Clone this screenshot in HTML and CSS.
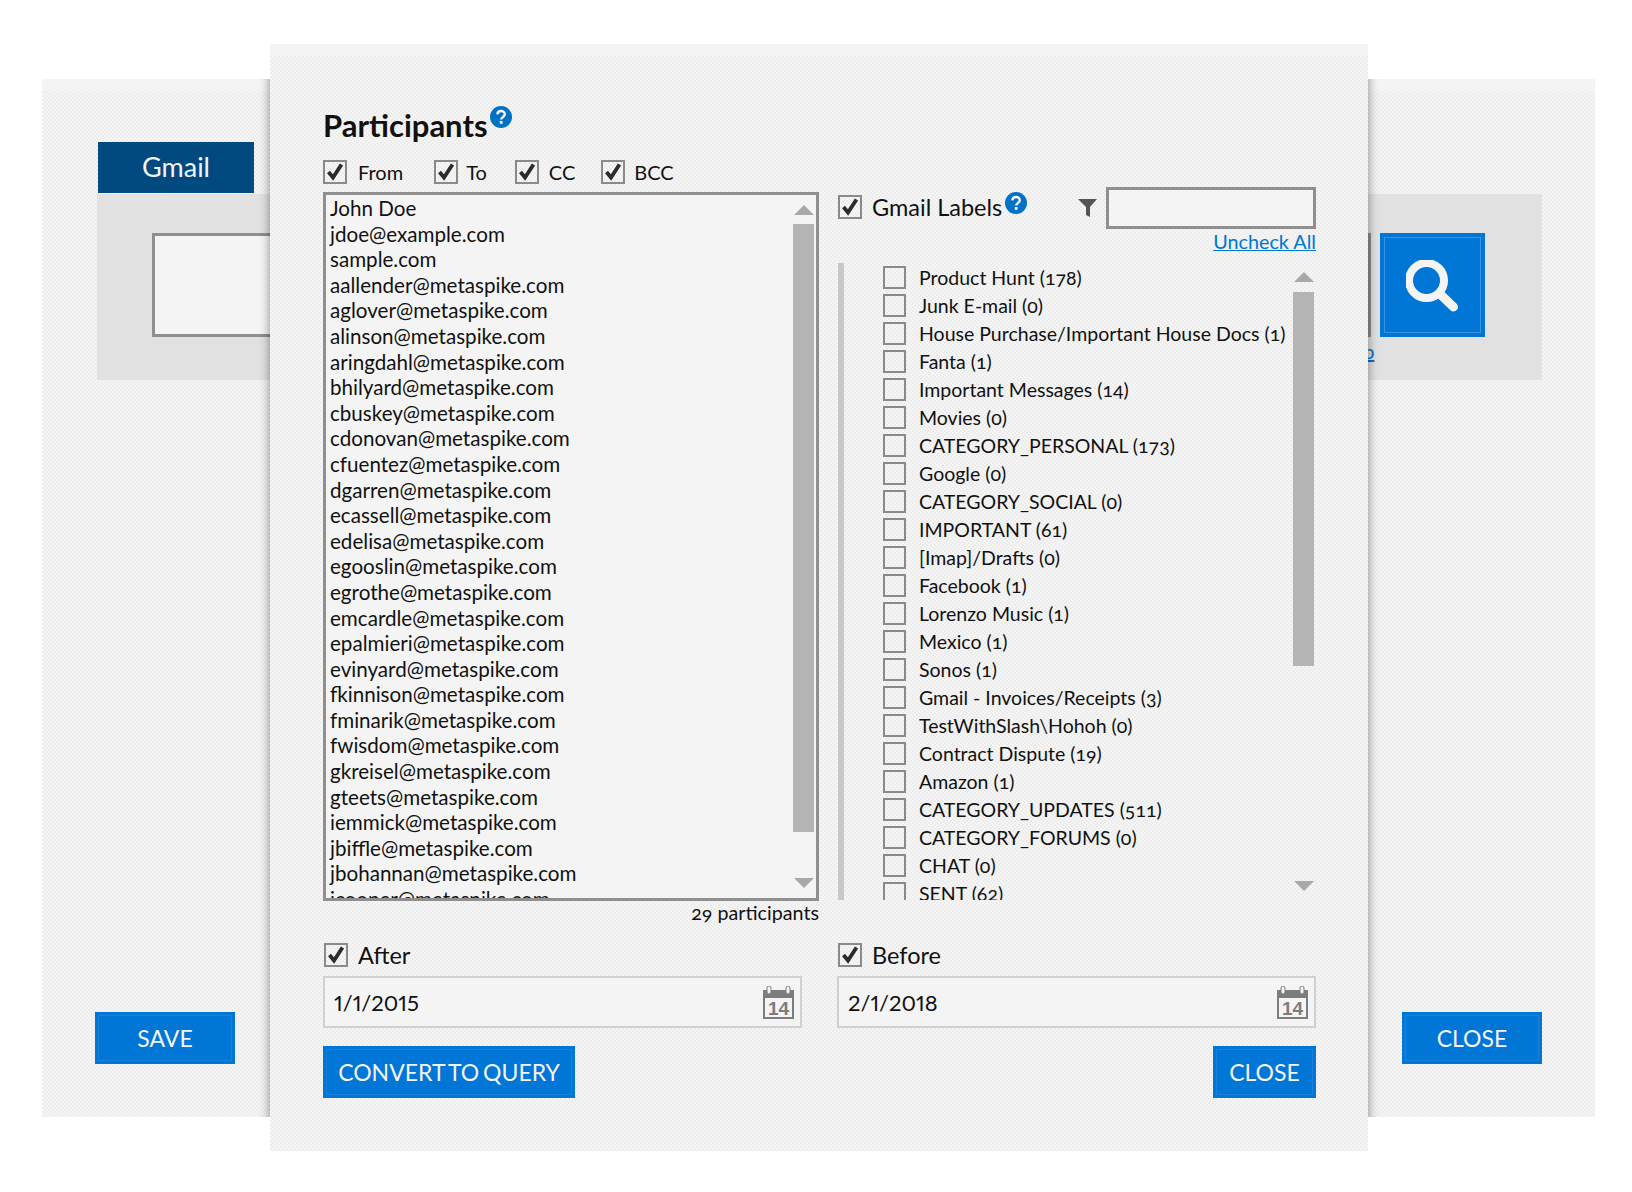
FILE: index.html
```html
<!DOCTYPE html>
<html lang="en">
<head>
    <meta charset="UTF-8">
    <title>Participants</title>
    <link rel="stylesheet" href="styles.css">
</head>
<body>
    <svg class="sprites" width="0" height="0">
        <symbol id="tick" viewBox="0 0 20 20"><path d="M3.5 10 L8 15.5 L16.5 2.5" fill="none" stroke="#2b2b2b" stroke-width="3.8"/></symbol>
        <symbol id="help" viewBox="0 0 22 22"><circle cx="11" cy="11" r="11" fill="#0072c6"/><path d="M7.4 8.4 C7.6 3.9 14.8 4 14.8 8.2 C14.8 11 11.2 10.9 11.2 13.6" fill="none" stroke="#f4f4f4" stroke-width="2.4"/><rect x="9.8" y="15" width="2.8" height="2.8" fill="#f4f4f4"/></symbol>
        <symbol id="cal" viewBox="0 0 31 33">
            <path d="M0 4 H31 V33 H0 Z M2 12 V31 H29 V12 Z" fill="#7d7d7d" fill-rule="evenodd"/>
            <rect x="4" y="0" width="4" height="8" rx="2" fill="#f4f4f4" stroke="#7d7d7d"/>
            <rect x="23" y="0" width="4" height="8" rx="2" fill="#f4f4f4" stroke="#7d7d7d"/>
            <text x="15.5" y="29" text-anchor="middle" font-family="Liberation Sans, sans-serif" font-size="19" font-weight="700" fill="#7d7d7d">14</text>
        </symbol>
    </svg>

    <div class="back-window">
        <div class="tab">Gmail</div>
        <div class="band">
            <div class="back-input"></div>
            <div class="search-btn">
                <svg width="54" height="54" viewBox="0 0 54 54"><circle cx="20.5" cy="20.5" r="17.5" fill="none" stroke="#f4f4f4" stroke-width="8"/><path d="M34 34 L47.5 47" stroke="#f4f4f4" stroke-width="9" stroke-linecap="round"/></svg>
            </div>
            <a class="back-link" href="#">Help</a>
        </div>
        <div class="back-footer">
            <div class="btn back-btn">SAVE</div>
            <div class="btn back-btn">CLOSE</div>
        </div>
        <div class="modal-shade"></div>
    </div>

    <div class="modal">
        <h2 class="title">Participants<svg class="help help-title"><use href="#help"/></svg></h2>

        <div class="columns">
            <div class="col-left">
                <div class="field-checks">
                    <label class="check check-from"><span class="box"><svg><use href="#tick"/></svg></span>From</label>
                    <label class="check check-to"><span class="box"><svg><use href="#tick"/></svg></span>To</label>
                    <label class="check"><span class="box"><svg><use href="#tick"/></svg></span>CC</label>
                    <label class="check check-bcc"><span class="box"><svg><use href="#tick"/></svg></span>BCC</label>
                </div>
                <div class="listbox">
                    <div class="people">
                        <div>John Doe</div>
                        <div>jdoe@example.com</div>
                        <div>sample.com</div>
                        <div>aallender@metaspike.com</div>
                        <div>aglover@metaspike.com</div>
                        <div>alinson@metaspike.com</div>
                        <div>aringdahl@metaspike.com</div>
                        <div>bhilyard@metaspike.com</div>
                        <div>cbuskey@metaspike.com</div>
                        <div>cdonovan@metaspike.com</div>
                        <div>cfuentez@metaspike.com</div>
                        <div>dgarren@metaspike.com</div>
                        <div>ecassell@metaspike.com</div>
                        <div>edelisa@metaspike.com</div>
                        <div>egooslin@metaspike.com</div>
                        <div>egrothe@metaspike.com</div>
                        <div>emcardle@metaspike.com</div>
                        <div>epalmieri@metaspike.com</div>
                        <div>evinyard@metaspike.com</div>
                        <div>fkinnison@metaspike.com</div>
                        <div>fminarik@metaspike.com</div>
                        <div>fwisdom@metaspike.com</div>
                        <div>gkreisel@metaspike.com</div>
                        <div>gteets@metaspike.com</div>
                        <div>iemmick@metaspike.com</div>
                        <div>jbiffle@metaspike.com</div>
                        <div>jbohannan@metaspike.com</div>
                        <div>jcooper@metaspike.com</div>
                    </div>
                    <div class="scrollbar scrollbar-people">
                        <span class="arrow-up"></span>
                        <span class="thumb"></span>
                        <span class="arrow-down"></span>
                    </div>
                </div>
                <div class="count">29 participants</div>
            </div>

            <div class="col-right">
                <div class="labels-head">
                    <label class="check check-big"><span class="box"><svg><use href="#tick"/></svg></span>Gmail Labels<svg class="help help-small"><use href="#help"/></svg></label>
                    <div class="filter">
                        <svg width="20" height="20" viewBox="0 0 20 20"><path d="M0 1 H19 L12 9 V19 L8 17 V9 Z" fill="#555"/></svg>
                        <div class="filter-input"></div>
                    </div>
                </div>
                <a class="uncheck" href="#">Uncheck All</a>
                <div class="labels-pane">
                    <div class="labels">
                        <label class="check label-row"><span class="box"></span>Product Hunt (178)</label>
                        <label class="check label-row"><span class="box"></span>Junk E-mail (0)</label>
                        <label class="check label-row"><span class="box"></span>House Purchase/Important House Docs (1)</label>
                        <label class="check label-row"><span class="box"></span>Fanta (1)</label>
                        <label class="check label-row"><span class="box"></span>Important Messages (14)</label>
                        <label class="check label-row"><span class="box"></span>Movies (0)</label>
                        <label class="check label-row"><span class="box"></span>CATEGORY_PERSONAL (173)</label>
                        <label class="check label-row"><span class="box"></span>Google (0)</label>
                        <label class="check label-row"><span class="box"></span>CATEGORY_SOCIAL (0)</label>
                        <label class="check label-row"><span class="box"></span>IMPORTANT (61)</label>
                        <label class="check label-row"><span class="box"></span>[Imap]/Drafts (0)</label>
                        <label class="check label-row"><span class="box"></span>Facebook (1)</label>
                        <label class="check label-row"><span class="box"></span>Lorenzo Music (1)</label>
                        <label class="check label-row"><span class="box"></span>Mexico (1)</label>
                        <label class="check label-row"><span class="box"></span>Sonos (1)</label>
                        <label class="check label-row"><span class="box"></span>Gmail - Invoices/Receipts (3)</label>
                        <label class="check label-row"><span class="box"></span>TestWithSlash\Hohoh (0)</label>
                        <label class="check label-row"><span class="box"></span>Contract Dispute (19)</label>
                        <label class="check label-row"><span class="box"></span>Amazon (1)</label>
                        <label class="check label-row"><span class="box"></span>CATEGORY_UPDATES (511)</label>
                        <label class="check label-row"><span class="box"></span>CATEGORY_FORUMS (0)</label>
                        <label class="check label-row"><span class="box"></span>CHAT (0)</label>
                        <label class="check label-row"><span class="box"></span>SENT (62)</label>
                    </div>
                    <div class="scrollbar scrollbar-labels">
                        <span class="arrow-up"></span>
                        <span class="thumb"></span>
                        <span class="arrow-down"></span>
                    </div>
                </div>
            </div>
        </div>

        <div class="dates">
            <div class="date-col">
                <label class="check check-big"><span class="box"><svg><use href="#tick"/></svg></span>After</label>
                <div class="date-input">1/1/2015<svg class="cal"><use href="#cal"/></svg></div>
            </div>
            <div class="date-col">
                <label class="check check-big"><span class="box"><svg><use href="#tick"/></svg></span>Before</label>
                <div class="date-input">2/1/2018<svg class="cal"><use href="#cal"/></svg></div>
            </div>
        </div>

        <div class="modal-footer">
            <div class="btn convert-btn">CONVERT TO QUERY</div>
            <div class="btn close-btn">CLOSE</div>
        </div>
    </div>
</body>
</html>
```

FILE: styles.css
```css
body {
    margin: 0;
    width: 1632px;
    height: 1192px;
    position: relative;
    overflow: hidden;
    background-color: #fff;
    font-family: "Lato", "Open Sans", sans-serif;
    font-variant-numeric: oldstyle-nums;
    color: #111;
}

.sprites {
    position: absolute;
}

/* plain strip on top, dotted texture below */
.back-window,
.modal {
    background-color: #f5f5f5;
    background-image:
        linear-gradient(#f4f4f4, #f4f4f4),
        radial-gradient(circle at 1px 1px, #ececec 0.7px, transparent 0.9px),
        radial-gradient(circle at 3px 3px, #ececec 0.7px, transparent 0.9px);
    background-size: 100% 12px, 4px 4px, 4px 4px;
    background-repeat: no-repeat, repeat, repeat;
}

/* window behind the dialog */
.back-window {
    position: relative;
    box-sizing: border-box;
    display: flex;
    flex-direction: column;
    width: 1553px;
    height: 1038px;
    margin: 79px 0 0 42px;
    padding: 63px 53px 53px 53px;
    overflow: hidden;
}

.tab {
    width: 156px;
    height: 51px;
    margin-left: 3px;
    background-color: #004a7f;
    color: #f4f4f4;
    font-size: 27px;
    line-height: 49px;
    text-align: center;
}

.band {
    position: relative;
    display: flex;
    gap: 9px;
    box-sizing: border-box;
    height: 186px;
    margin: 1px 0 0 2px;
    padding: 39px 57px 43px 55px;
    background-color: #e1e1e1;
}

.back-input {
    flex: 1;
    box-sizing: border-box;
    border: 3px solid #8f8f8f;
    background-color: #f4f4f4;
}

.search-btn {
    display: flex;
    align-items: center;
    justify-content: center;
    box-sizing: border-box;
    width: 105px;
    border: 3px solid #0076d6;
    outline: 1px solid #3a93dc;
    outline-offset: -5px;
    background-color: #0076d6;
}

.search-btn svg {
    margin-top: 3px;
}

.back-link {
    position: absolute;
    left: 1236px;
    top: 145px;
    color: #0076d6;
    font-size: 20px;
}

.back-footer {
    display: flex;
    justify-content: space-between;
    margin-top: auto;
}

.btn {
    box-sizing: border-box;
    height: 52px;
    background-color: #0076d6;
    color: #f4f4f4;
    font-size: 23px;
    line-height: 52px;
    text-align: center;
    outline: 1px solid #1a80d8;
    outline-offset: -4px;
}

.back-btn {
    width: 140px;
}

.modal-shade {
    position: absolute;
    left: 228px;
    top: -40px;
    width: 1098px;
    height: 1200px;
    box-shadow: 0 0 10px rgba(0, 0, 0, 0.45);
}

/* dialog */
.modal {
    position: absolute;
    left: 270px;
    top: 44px;
    box-sizing: border-box;
    width: 1098px;
    height: 1107px;
    padding: 56px 52px 0 53px;
}

.title {
    display: flex;
    margin: 0;
    height: 53px;
    font-size: 31px;
    font-weight: 700;
    line-height: 50px;
}

.help {
    width: 22px;
    height: 22px;
    margin: 0 0 0 3px;
}

.help-title {
    margin: 6px 0 0 2px;
}

.columns {
    display: flex;
    justify-content: space-between;
    margin-top: 4px;
}

.col-left {
    width: 496px;
}

.col-right {
    width: 478px;
    margin-top: 29px;
}

.check {
    display: flex;
    align-items: center;
    font-size: 20px;
}

.box {
    flex: none;
    box-sizing: border-box;
    width: 24px;
    height: 24px;
    margin-right: 10px;
    border: 2px solid #8a8a8a;
}

.box svg {
    display: block;
    width: 20px;
    height: 20px;
}

.field-checks {
    display: flex;
    height: 29px;
    margin-bottom: 6px;
    gap: 28px;
}

.check-from {
    margin-right: 3px;
}

.check-from .box {
    margin-right: 11px;
}

.check-to .box {
    margin-right: 8px;
}

.check-bcc {
    margin-left: -2px;
}

.check-bcc .box {
    margin-right: 9px;
}

.listbox {
    position: relative;
    box-sizing: border-box;
    height: 709px;
    border: 3px solid #8f8f8f;
    background-color: #f4f4f4;
    overflow: hidden;
}

.people {
    font-size: 20.6px;
    line-height: 25.6px;
    padding: 1px 0 0 4px;
    white-space: nowrap;
}

.scrollbar {
    position: absolute;
    display: flex;
    flex-direction: column;
    align-items: center;
    width: 21px;
}

.scrollbar-people {
    right: 2px;
    top: 10px;
    height: 683px;
}

.scrollbar-labels {
    right: 2px;
    top: 9px;
    height: 619px;
}

.thumb {
    display: block;
    width: 21px;
    background-color: #b4b4b4;
}

.scrollbar-people .thumb {
    height: 608px;
    margin-top: 9px;
}

.scrollbar-labels .thumb {
    height: 374px;
    margin-top: 10px;
}

.arrow-up {
    width: 0;
    height: 0;
    border: 10px solid transparent;
    border-top: 0;
    border-bottom: 10px solid #a8a8a8;
}

.arrow-down {
    width: 0;
    height: 0;
    margin-top: auto;
    border: 10px solid transparent;
    border-bottom: 0;
    border-top: 10px solid #a8a8a8;
}

.count {
    margin-top: -1px;
    font-size: 19.7px;
    line-height: 26px;
    text-align: right;
}

.labels-head {
    display: flex;
    justify-content: space-between;
    align-items: center;
    height: 42px;
}

.check-big {
    font-size: 23.5px;
}

.help-small {
    margin-bottom: 9px;
}

.filter {
    display: flex;
    align-items: center;
    gap: 8px;
    margin-top: 1px;
}

.filter-input {
    box-sizing: border-box;
    width: 210px;
    height: 42px;
    border: 3px solid #8f8f8f;
    background-color: #f4f4f4;
}

.uncheck {
    display: block;
    height: 28px;
    margin-top: -1px;
    color: #0076d6;
    font-size: 19.8px;
    line-height: 28px;
    text-align: right;
}

.labels-pane {
    position: relative;
    box-sizing: border-box;
    height: 637px;
    margin-top: 8px;
    border-left: 6px solid #c8c8c8;
    overflow: hidden;
}

.labels {
    padding-left: 39px;
}

.label-row {
    height: 28px;
    font-size: 19.5px;
    white-space: nowrap;
}

.label-row .box {
    width: 23px;
    height: 23px;
    margin-right: 13px;
}

.dates {
    display: flex;
    justify-content: space-between;
    margin-top: 8px;
}

.date-col {
    width: 479px;
}

.date-col .check {
    height: 42px;
    padding-left: 1px;
}

.date-input {
    display: flex;
    align-items: center;
    justify-content: space-between;
    box-sizing: border-box;
    height: 52px;
    padding: 0 6px 0 9px;
    border: 2px solid #d0d0d0;
    background-color: #f4f4f4;
    font-size: 22px;
    font-variant-numeric: lining-nums proportional-nums;
}

.cal {
    width: 31px;
    height: 33px;
}

.modal-footer {
    display: flex;
    justify-content: space-between;
    margin-top: 18px;
}

.convert-btn {
    width: 252px;
    word-spacing: -2px;
}

.close-btn {
    width: 103px;
}
```
